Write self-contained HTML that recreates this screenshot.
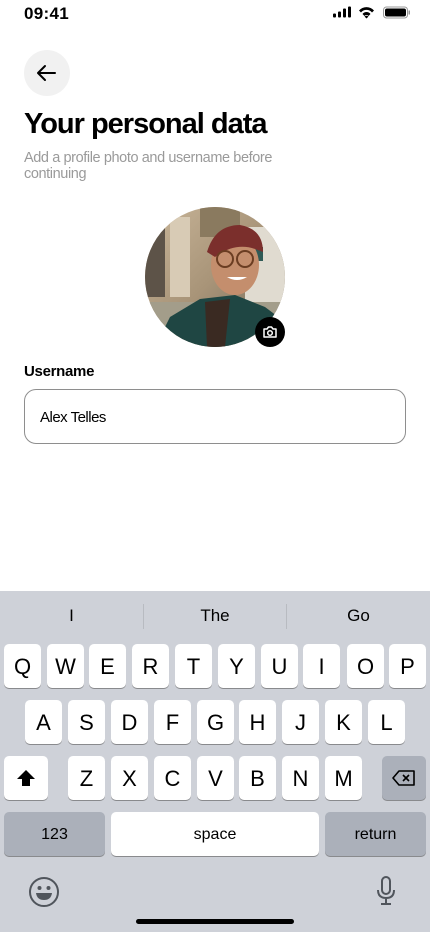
<!DOCTYPE html>
<html><head><meta charset="utf-8"><style>
*{margin:0;padding:0;box-sizing:border-box}
body{width:430px;height:932px;position:relative;background:#fff;font-family:"Liberation Sans",sans-serif;overflow:hidden;color:#000}
.a{position:absolute}
.k{position:absolute;width:37px;height:44px;background:#fff;border-radius:5px;box-shadow:0 1px 0 #898a8d;font-size:22px;text-align:center;line-height:45px;color:#000}
.g{background:#abb0ba}
</style></head><body>
<div class="a" style="left:24px;top:4px;font-size:17px;font-weight:bold;letter-spacing:0.3px">09:41</div>
<svg class="a" style="left:333px;top:5px" width="78" height="15" viewBox="0 0 78 14">
<rect x="0" y="8" width="3" height="4" rx="1"/><rect x="5" y="6" width="3" height="6" rx="1"/><rect x="10" y="3" width="3" height="9" rx="1"/><rect x="15" y="1" width="3" height="11" rx="1"/>
<path d="M26 5 A10 10 0 0 1 41 5 L39 7 A7 7 0 0 0 28 7Z M29.5 8.5 A5 5 0 0 1 37.5 8.5 L35.5 10.5 A2.5 2.5 0 0 0 31.5 10.5Z M33.5 13 L31.5 11 A3 3 0 0 1 35.5 11Z"/>
<rect x="50.5" y="1.5" width="24" height="11" rx="3" fill="none" stroke="#999"/><rect x="52" y="3" width="21" height="8" rx="2"/><rect x="75.5" y="5" width="1.5" height="4" fill="#999"/>
</svg>
<div class="a" style="left:24px;top:50px;width:46px;height:46px;border-radius:50%;background:#f1f1f1"></div>
<svg class="a" style="left:35px;top:61px" width="24" height="24" viewBox="0 0 24 24"><path d="M20 12H4M10 5L3 12L10 19" fill="none" stroke="#000" stroke-width="2" stroke-linecap="round" stroke-linejoin="round"/></svg>
<div class="a" style="left:24px;top:108px;font-size:29px;font-weight:bold;letter-spacing:-1px">Your personal data</div>
<div class="a" style="left:24px;top:150px;font-size:14.5px;color:#9a9a9a;letter-spacing:-0.4px;line-height:16px;width:300px">Add a profile photo and username before continuing</div>
<svg class="a" style="left:145px;top:207px" width="140" height="140" viewBox="0 0 140 140">
<defs><clipPath id="c"><circle cx="70" cy="70" r="70"/></clipPath>
<linearGradient id="bg" x1="0" y1="0" x2="1" y2="1"><stop offset="0" stop-color="#c9b69a"/><stop offset="0.5" stop-color="#a89478"/><stop offset="1" stop-color="#6b6456"/></linearGradient></defs>
<g clip-path="url(#c)">
<rect width="140" height="140" fill="url(#bg)"/>
<rect x="0" y="0" width="20" height="90" fill="#5d5348"/>
<rect x="25" y="10" width="20" height="80" fill="#d8cbb5"/>
<rect x="100" y="20" width="45" height="90" fill="#e0dbd0"/>
<rect x="110" y="40" width="8" height="14" fill="#2f5a56"/>
<rect x="55" y="0" width="40" height="30" fill="#8a7a5f"/>
<rect x="0" y="95" width="140" height="45" fill="#a39d8a"/>
<path d="M10 140 L25 110 L55 92 L90 88 L120 100 L140 115 L140 140Z" fill="#1f4643"/>
<path d="M60 95 L85 92 L80 140 L62 140Z" fill="#3a2a22"/>
<ellipse cx="90" cy="58" rx="24" ry="30" fill="#c48e6d"/>
<path d="M62 45 Q70 18 95 18 Q118 22 118 45 L110 42 Q90 35 70 50Z" fill="#7b2f2c"/>
<circle cx="80" cy="52" r="8" fill="none" stroke="#6b3d22" stroke-width="2"/><circle cx="100" cy="52" r="8" fill="none" stroke="#6b3d22" stroke-width="2"/>
<path d="M82 70 Q92 76 102 70" fill="#fff"/>
</g></svg>
<div class="a" style="left:255px;top:317px;width:30px;height:30px;border-radius:50%;background:#000"></div>
<svg class="a" style="left:262px;top:324px" width="16" height="16" viewBox="0 0 16 16"><path d="M2 5h3l1.5-2h3L11 5h3v8H2Z" fill="none" stroke="#fff" stroke-width="1.5" stroke-linejoin="round"/><circle cx="8" cy="9" r="2.3" fill="none" stroke="#fff" stroke-width="1.5"/></svg>
<div class="a" style="left:24px;top:363px;font-size:15px;font-weight:bold;letter-spacing:-0.3px">Username</div>
<div class="a" style="left:24px;top:389px;width:382px;height:55px;border:1px solid #8e8e8e;border-radius:12px"></div>
<div class="a" style="left:40px;top:409px;font-size:15px;letter-spacing:-0.5px">Alex Telles</div>
<div class="a" style="left:0;top:591px;width:430px;height:341px;background:#ced1d8"></div>
<div class="a" style="left:0;top:606px;width:143px;text-align:center;font-size:17px">I</div>
<div class="a" style="left:143px;top:606px;width:144px;text-align:center;font-size:17px">The</div>
<div class="a" style="left:287px;top:606px;width:143px;text-align:center;font-size:17px">Go</div>
<div class="a" style="left:143px;top:604px;width:1px;height:25px;background:#b8bbc1"></div>
<div class="a" style="left:286px;top:604px;width:1px;height:25px;background:#b8bbc1"></div>
<div class="k" style="left:4px;top:644px">Q</div><div class="k" style="left:47px;top:644px">W</div><div class="k" style="left:89px;top:644px">E</div><div class="k" style="left:132px;top:644px">R</div><div class="k" style="left:175px;top:644px">T</div><div class="k" style="left:218px;top:644px">Y</div><div class="k" style="left:261px;top:644px">U</div><div class="k" style="left:303px;top:644px">I</div><div class="k" style="left:347px;top:644px">O</div><div class="k" style="left:389px;top:644px">P</div>
<div class="k" style="left:25px;top:700px">A</div><div class="k" style="left:68px;top:700px">S</div><div class="k" style="left:111px;top:700px">D</div><div class="k" style="left:154px;top:700px">F</div><div class="k" style="left:197px;top:700px">G</div><div class="k" style="left:239px;top:700px">H</div><div class="k" style="left:282px;top:700px">J</div><div class="k" style="left:325px;top:700px">K</div><div class="k" style="left:368px;top:700px">L</div>
<div class="k" style="left:4px;top:756px;width:44px"><svg width="20" height="18" viewBox="0 0 20 18" style="margin-top:13px"><path d="M10 1L1 10h5v7h8v-7h5Z"/></svg></div>
<div class="k" style="left:68px;top:756px">Z</div><div class="k" style="left:111px;top:756px">X</div><div class="k" style="left:154px;top:756px">C</div><div class="k" style="left:197px;top:756px">V</div><div class="k" style="left:239px;top:756px">B</div><div class="k" style="left:282px;top:756px">N</div><div class="k" style="left:325px;top:756px">M</div>
<div class="k g" style="left:382px;top:756px;width:44px"><svg width="24" height="18" viewBox="0 0 24 18" style="margin-top:13px"><path d="M7 2h15v14H7L1 9Z" fill="none" stroke="#000" stroke-width="1.6" stroke-linejoin="round"/><path d="M11 6l6 6M17 6l-6 6" stroke="#000" stroke-width="1.6"/></svg></div>
<div class="k g" style="left:4px;top:812px;width:101px;font-size:16px">123</div>
<div class="k" style="left:111px;top:812px;width:208px;font-size:16px">space</div>
<div class="k g" style="left:325px;top:812px;width:101px;font-size:16px">return</div>
<svg class="a" style="left:28px;top:876px" width="32" height="32" viewBox="0 0 32 32"><circle cx="16" cy="16" r="14" fill="none" stroke="#50555c" stroke-width="2"/><circle cx="11.5" cy="12" r="2" fill="#50555c"/><circle cx="20.5" cy="12" r="2" fill="#50555c"/><path d="M8 17h16q-1 7-8 7t-8-7Z" fill="#50555c"/></svg>
<svg class="a" style="left:376px;top:876px" width="20" height="30" viewBox="0 0 20 30"><rect x="6" y="1" width="8" height="17" rx="4" fill="none" stroke="#50555c" stroke-width="2"/><path d="M2 14q0 8 8 8t8-8M10 22v6M5 28h10" fill="none" stroke="#50555c" stroke-width="2"/></svg>
<div class="a" style="left:136px;top:919px;width:158px;height:5px;border-radius:3px;background:#000"></div>
</body></html>
